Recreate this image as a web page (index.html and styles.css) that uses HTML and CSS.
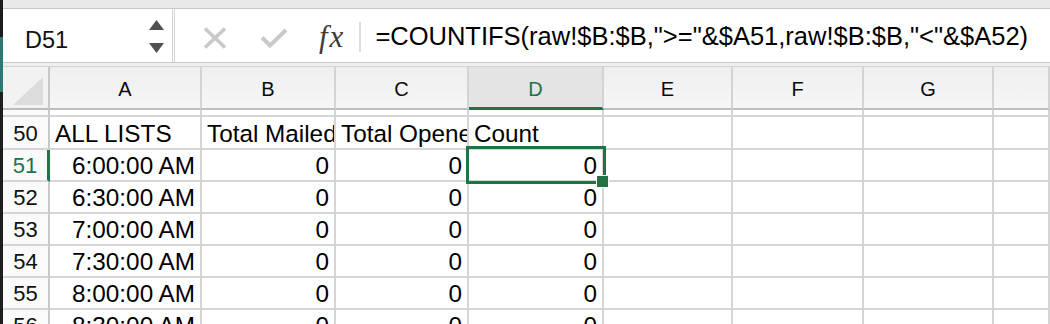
FILE: index.html
```html
<!DOCTYPE html>
<html>
<head>
<meta charset="utf-8">
<link rel="stylesheet" href="styles.css">
</head>
<body>
<div class="window">
  <div class="edge"></div>
  <div class="app">
    <div class="topband"></div>
    <div class="fbar">
      <div class="namebox">
        <span class="name">D51</span>
        <div class="spin">
          <svg width="15" height="10" viewBox="0 0 15 10"><path d="M7.5 0L15 10H0Z" fill="#505050"/></svg>
          <svg width="15" height="10" viewBox="0 0 15 10"><path d="M0 0H15L7.5 10Z" fill="#505050"/></svg>
        </div>
      </div>
      <div class="formula">
        <svg class="ico cancel" width="24" height="22" viewBox="0 0 24 22"><path d="M2 1.5L22 20.5M22 1.5L2 20.5" stroke="#c9c9c9" stroke-width="3.6" fill="none"/></svg>
        <svg class="ico check" width="28" height="20" viewBox="0 0 28 20"><path d="M2 9.5L10 17.5L26 2" stroke="#c9c9c9" stroke-width="4" fill="none"/></svg>
        <span class="fx">fx</span>
        <span class="vsep"></span>
        <span class="ftext">=COUNTIFS(raw!$B:$B,"&gt;="&amp;$A51,raw!$B:$B,"&lt;"&amp;$A52)</span>
      </div>
    </div>
    <div class="band"></div>
    <div class="sheet">
      <div class="h corner"><svg width="45" height="41" viewBox="0 0 45 41"><path d="M40 10V38H10Z" fill="#dcdcdc"/></svg></div>
      <div class="h">A</div>
      <div class="h">B</div>
      <div class="h">C</div>
      <div class="h hsel">D</div>
      <div class="h">E</div>
      <div class="h">F</div>
      <div class="h">G</div>
      <div class="h"></div>

      <div class="sp rhs"></div><div class="sp"></div><div class="sp"></div><div class="sp"></div><div class="sp"></div><div class="sp"></div><div class="sp"></div><div class="sp"></div><div class="sp"></div>

      <div class="c rh">50</div>
      <div class="c">ALL LISTS</div>
      <div class="c">Total Mailed</div>
      <div class="c">Total Opened</div>
      <div class="c">Count</div>
      <div class="c"></div><div class="c"></div><div class="c"></div><div class="c"></div>

      <div class="c rh rhsel">51</div>
      <div class="c r">6:00:00 AM</div>
      <div class="c r">0</div>
      <div class="c r">0</div>
      <div class="c r active">0<span class="selbox"></span><span class="handle"></span></div>
      <div class="c"></div><div class="c"></div><div class="c"></div><div class="c"></div>

      <div class="c rh">52</div>
      <div class="c r">6:30:00 AM</div>
      <div class="c r">0</div>
      <div class="c r">0</div>
      <div class="c r">0</div>
      <div class="c"></div><div class="c"></div><div class="c"></div><div class="c"></div>

      <div class="c rh">53</div>
      <div class="c r">7:00:00 AM</div>
      <div class="c r">0</div>
      <div class="c r">0</div>
      <div class="c r">0</div>
      <div class="c"></div><div class="c"></div><div class="c"></div><div class="c"></div>

      <div class="c rh">54</div>
      <div class="c r">7:30:00 AM</div>
      <div class="c r">0</div>
      <div class="c r">0</div>
      <div class="c r">0</div>
      <div class="c"></div><div class="c"></div><div class="c"></div><div class="c"></div>

      <div class="c rh">55</div>
      <div class="c r">8:00:00 AM</div>
      <div class="c r">0</div>
      <div class="c r">0</div>
      <div class="c r">0</div>
      <div class="c"></div><div class="c"></div><div class="c"></div><div class="c"></div>

      <div class="c rh">56</div>
      <div class="c r">8:30:00 AM</div>
      <div class="c r">0</div>
      <div class="c r">0</div>
      <div class="c r">0</div>
      <div class="c"></div><div class="c"></div><div class="c"></div><div class="c"></div>
    </div>
  </div>
</div>
</body>
</html>
```
FILE: styles.css
```css
html, body {
  margin: 0;
  padding: 0;
}
body {
  width: 1050px;
  height: 324px;
  overflow: hidden;
  background: #fff;
  font-family: "Liberation Sans", Arial, sans-serif;
  color: #000;
}
.window {
  display: flex;
  height: 324px;
  overflow: hidden;
}
.edge {
  width: 3px;
  flex: none;
  background: linear-gradient(#1c1c1c 0 37px, #2b7a72 37px 92px, #1e1e1e 92px);
}
.app {
  flex: 1;
  min-width: 0;
  display: flex;
  flex-direction: column;
}
.topband {
  height: 8px;
  background: #e9e9e9;
  border-bottom: 1px solid #c8c8c8;
  flex: none;
}
.fbar {
  height: 53px;
  flex: none;
  display: flex;
  background: #fff;
}
.namebox {
  width: 169px;
  flex: none;
  display: flex;
  border-right: 3px double #d4d4d4;
}
.name {
  flex: 1;
  font-size: 23.5px;
  line-height: 44px;
  padding-top: 9px;
  padding-left: 22px;
  color: #111;
}
.spin {
  width: 15px;
  margin-right: 8px;
  padding-top: 11px;
  display: flex;
  flex-direction: column;
  gap: 13px;
}
.spin svg {
  display: block;
}
.formula {
  flex: 1;
  display: flex;
  align-items: center;
  white-space: nowrap;
}
.ico {
  display: block;
  flex: none;
  margin-top: 4px;
}
.cancel {
  margin-left: 28px;
}
.check {
  margin-left: 33px;
}
.fx {
  margin-left: 31px;
  margin-top: 2px;
  font-family: "Liberation Serif", "Times New Roman", serif;
  font-style: italic;
  font-size: 31px;
  letter-spacing: 2px;
  color: #3c3c3c;
}
.vsep {
  width: 2px;
  height: 30px;
  margin-left: 14px;
  margin-top: 3px;
  background: #dedede;
}
.ftext {
  margin-left: 14px;
  font-size: 25.5px;
  line-height: 44px;
  color: #000;
}
.band {
  height: 3px;
  flex: none;
  background: #efefef;
  border-top: 1px solid #c9c9c9;
  border-bottom: 1px solid #d4d4d4;
}
.sheet {
  position: relative;
  display: grid;
  grid-template-columns: 47px 152px 134px 133px 135px 129px 131px 130px 1fr;
  grid-template-rows: 43px 7px 33px repeat(6, 32px);
}
.h {
  box-sizing: border-box;
  background: linear-gradient(#eeeeee, #f6f6f6);
  border-right: 2px solid #d3d3d3;
  border-bottom: 2px solid #bdbdbd;
  display: flex;
  justify-content: center;
  padding-top: 4px;
  font-size: 20px;
  line-height: 37px;
  color: #0a0a0a;
}
.corner {
  padding: 0;
  background: #f2f2f2;
  border-right-color: #c8c8c8;
}
.corner svg {
  display: block;
}
.hsel {
  background: #e4e4e4;
  border-bottom: 3px solid #217346;
  color: #217346;
  line-height: 36px;
}
.sp {
  box-sizing: border-box;
  background: #fff;
  border-right: 2px solid #d5d5d5;
  border-bottom: 2px solid #d5d5d5;
}
.rhs {
  background: #fafafa;
  border-right-color: #c8c8c8;
}
.c {
  box-sizing: border-box;
  border-right: 2px solid #d5d5d5;
  border-bottom: 2px solid #d5d5d5;
  display: flex;
  align-items: flex-end;
  overflow: hidden;
  white-space: nowrap;
  font-size: 24.3px;
  line-height: 24px;
  padding: 0 5px 2px;
  background: #fff;
}
.r {
  justify-content: flex-end;
}
.rh {
  background: #fafafa;
  border-right-color: #c8c8c8;
  justify-content: center;
  font-size: 22px;
  line-height: 22px;
  padding: 0 0 3px;
  color: #111;
}
.rhsel {
  color: #217346;
  border-right: 3px solid #217346;
}
.active {
  position: relative;
  overflow: visible;
}
.selbox {
  position: absolute;
  left: -3px;
  top: -4px;
  width: 140px;
  height: 38px;
  box-sizing: border-box;
  border: 3px solid #217346;
}
.handle {
  position: absolute;
  left: 128px;
  top: 26px;
  width: 11px;
  height: 11px;
  background: #217346;
  box-shadow: 0 0 0 1px #fff;
}
```
